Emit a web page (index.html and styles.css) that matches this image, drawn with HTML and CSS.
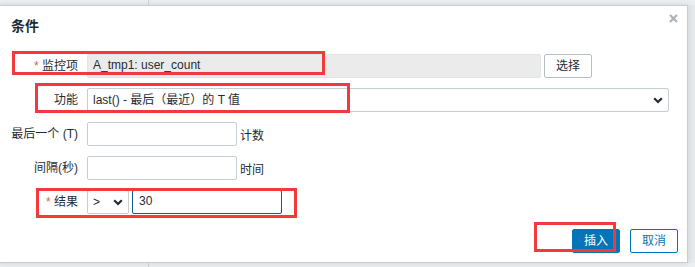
FILE: index.html
```html
<!DOCTYPE html>
<html lang="zh">
<head>
<meta charset="utf-8">
<link rel="stylesheet" href="styles.css">
</head>
<body>
<div class="strip strip-top"><div class="strip-col"></div></div>
<div class="dialog">
  <div class="close"><svg width="9" height="9" viewBox="0 0 9 9"><path d="M1 1L8 8M8 1L1 8" stroke="#aab3b9" stroke-width="2.2"/></svg></div>
  <div class="title">条件</div>
  <div class="form">
    <div class="label"><span class="req">*</span> 监控项</div>
    <div class="field">
      <div class="input readonly w454">A_tmp1: user_count</div>
      <div class="btn-alt">选择</div>
    </div>

    <div class="label">功能</div>
    <div class="field">
      <div class="select w582"><span>last() - 最后（最近）的 T 值</span><svg class="chev" width="10" height="7" viewBox="0 0 10 7"><path d="M1.2 1.2L5 5L8.8 1.2" fill="none" stroke="#1f2c33" stroke-width="2.2"/></svg></div>
    </div>

    <div class="label">最后一个 (T)</div>
    <div class="field">
      <div class="input w150"></div>
      <span class="suffix">计数</span>
    </div>

    <div class="label">间隔(秒)</div>
    <div class="field">
      <div class="input w150"></div>
      <span class="suffix">时间</span>
    </div>

    <div class="label"><span class="req">*</span> 结果</div>
    <div class="field">
      <div class="select w42"><span>&gt;</span><svg class="chev" width="10" height="7" viewBox="0 0 10 7"><path d="M1.2 1.2L5 5L8.8 1.2" fill="none" stroke="#1f2c33" stroke-width="2.2"/></svg></div>
      <div class="input focus w150">30</div>
    </div>
  </div>
  <div class="footer">
    <div class="btn-primary">插入</div>
    <div class="btn-cancel">取消</div>
  </div>
  <div class="mark mark1"></div>
  <div class="mark mark2"></div>
  <div class="mark mark3"></div>
  <div class="mark mark4"></div>
</div>
<div class="strip strip-bottom"><div class="strip-col"></div></div>
</body>
</html>
```
FILE: styles.css
```css
html, body {
  margin: 0;
  padding: 0;
}
body {
  width: 695px;
  height: 267px;
  overflow: hidden;
  background: #e6e9eb;
  font-family: "Liberation Sans", Arial, "Noto Sans CJK SC", sans-serif;
  font-size: 12px;
  color: #1f2c33;
}
.strip {
  display: flex;
  background: #eceff1;
}
.strip-top {
  height: 5px;
}
.strip-bottom {
  height: 4px;
}
.strip-col {
  width: 148px;
  border-right: 1px solid #cfd6da;
}
.dialog {
  position: relative;
  box-sizing: border-box;
  width: 689px;
  height: 258px;
  margin-left: -1px;
  background: #fff;
  border: 1px solid #c5ced3;
  box-shadow: 0 0 6px rgba(0,0,0,0.12);
  padding: 0 9px 0 0;
  display: flex;
  flex-direction: column;
}
.close {
  position: absolute;
  right: 9px;
  top: 8px;
  width: 9px;
  height: 9px;
  display: flex;
}
.title {
  font-size: 14px;
  font-weight: bold;
  line-height: 16px;
  margin: 12px 0 0 11px;
  color: #1f2c33;
}
.form {
  margin-top: 20px;
  display: grid;
  grid-template-columns: 78px 1fr;
  column-gap: 9px;
  row-gap: 10px;
}
.label {
  text-align: right;
  line-height: 24px;
  height: 24px;
  white-space: nowrap;
}
.req {
  color: #e45959;
}
.field {
  display: flex;
  align-items: center;
  gap: 3px;
  height: 24px;
}
.input, .select {
  box-sizing: border-box;
  height: 24px;
  line-height: 21px;
  padding-bottom: 1px;
  border: 1px solid #c5ced3;
  border-radius: 2px;
  background: #fff;
  padding-left: 5px;
  padding-right: 5px;
  white-space: nowrap;
}
.readonly {
  background: #ebebeb;
  border-color: #dfe4e7;
}
.focus {
  border-color: #15598f;
  padding-left: 6px;
}
.select {
  display: flex;
  align-items: center;
  justify-content: space-between;
  line-height: 22px;
  padding-bottom: 0;
}
.chev {
  flex: none;
}
.w454 { width: 454px; }
.w582 { width: 582px; }
.w150 { width: 150px; }
.w42 { width: 42px; }
.btn-alt {
  box-sizing: border-box;
  width: 48px;
  height: 24px;
  line-height: 22px;
  text-align: center;
  border: 1px solid #b4c0c7;
  border-radius: 2px;
  background: #fff;
}
.footer {
  margin-top: 15px;
  display: flex;
  justify-content: flex-end;
  gap: 10px;
}
.btn-primary, .btn-cancel {
  box-sizing: border-box;
  width: 48px;
  height: 24px;
  line-height: 22px;
  text-align: center;
  border-radius: 2px;
  border: 1px solid #0275b8;
}
.btn-primary {
  background: #0275b8;
  color: #fff;
}
.btn-cancel {
  background: #fff;
  color: #0275b8;
}
.mark {
  position: absolute;
  box-sizing: border-box;
  border: 3px solid #f23a3d;
}
.mark1 { left: 12px; top: 45px; width: 313px; height: 24px; }
.mark2 { left: 35px; top: 77px; width: 315px; height: 30px; }
.mark3 { left: 36px; top: 182px; width: 261px; height: 30px; }
.mark4 { left: 534px; top: 216px; width: 82px; height: 30px; }
```
